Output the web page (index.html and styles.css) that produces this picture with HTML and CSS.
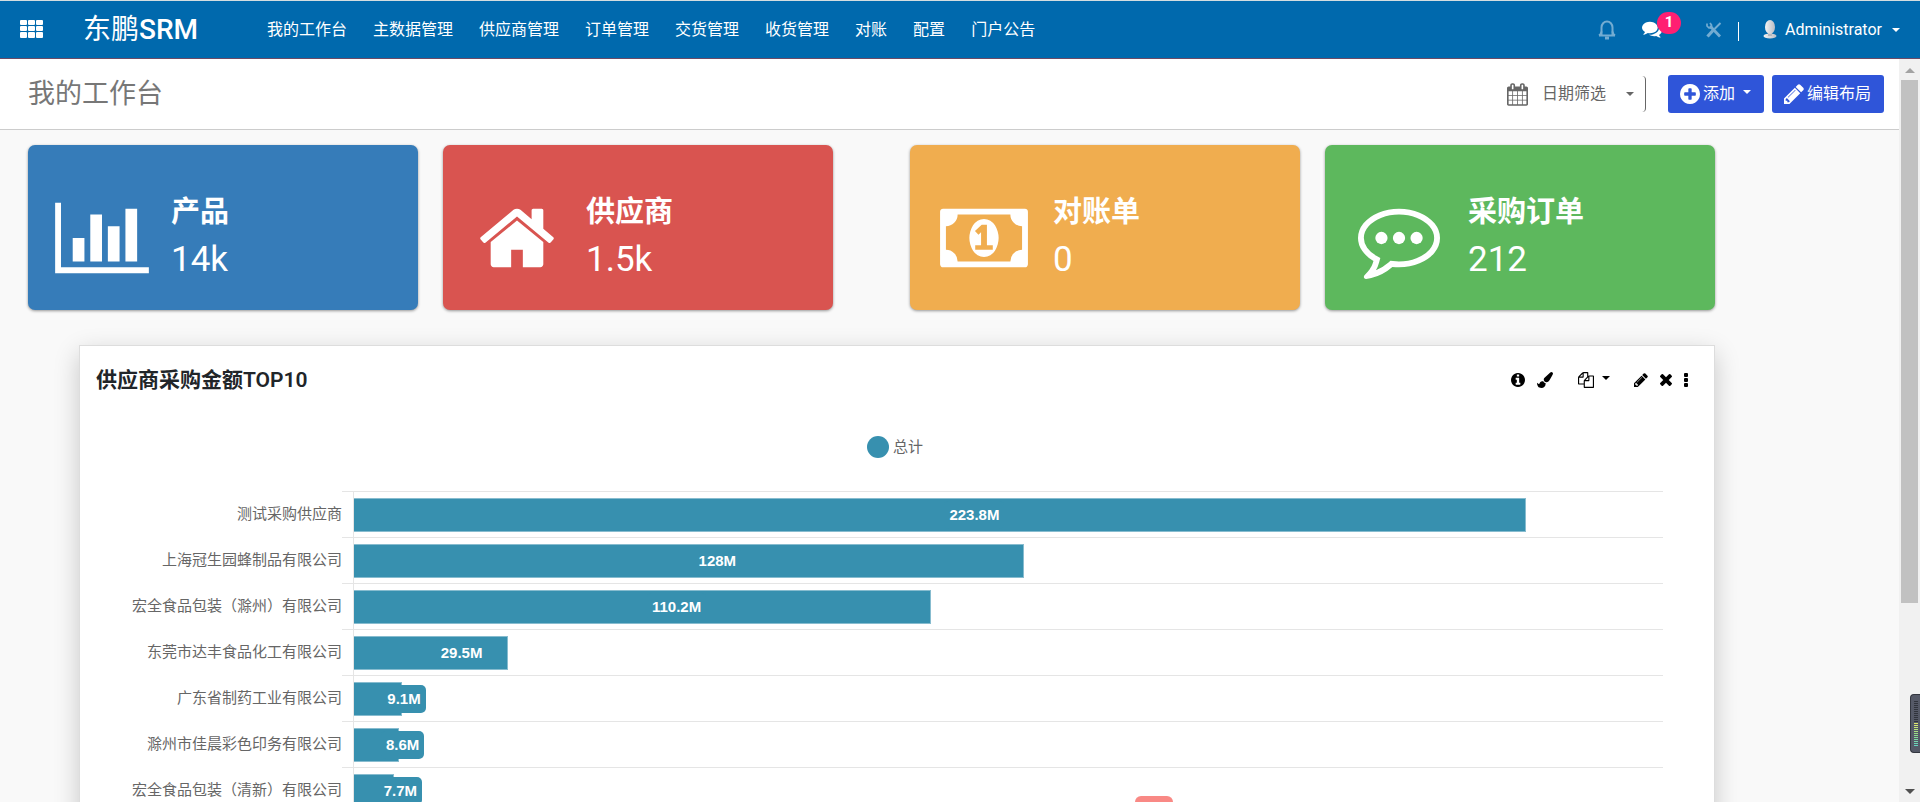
FILE: index.html
```html
<!DOCTYPE html>
<html lang="zh-CN">
<head>
<meta charset="utf-8">
<title>我的工作台 - 东鹏SRM</title>
<link rel="stylesheet" href="styles.css">
</head>
<body>
<header class="topbar">
  <button class="apps" aria-label="应用">
    <svg width="24" height="20" viewBox="0 0 24 20" fill="currentColor"><rect x="0" y="0" width="7" height="5" rx="1"/><rect x="8" y="0" width="7" height="5" rx="1"/><rect x="16" y="0" width="7" height="5" rx="1"/><rect x="0" y="6" width="7" height="5" rx="1"/><rect x="8" y="6" width="7" height="5" rx="1"/><rect x="16" y="6" width="7" height="5" rx="1"/><rect x="0" y="12" width="7" height="6" rx="1"/><rect x="8" y="12" width="7" height="6" rx="1"/><rect x="16" y="12" width="7" height="6" rx="1"/></svg>
  </button>
  <a class="brand" href="#">东鹏<b>SRM</b></a>
  <nav class="menu">
    <a href="#">我的工作台</a><a href="#">主数据管理</a><a href="#">供应商管理</a><a href="#">订单管理</a><a href="#">交货管理</a><a href="#">收货管理</a><a href="#">对账</a><a href="#">配置</a><a href="#">门户公告</a>
  </nav>
  <div class="systray">
    <button class="dim" aria-label="通知">
      <svg width="18" height="20" viewBox="0 0 18 20" fill="none" stroke="currentColor" stroke-width="2"><path d="M1 15.500h16M3.500 15V7.500a5.500 6 0 0 1 11 0V15"/><path d="M7 18h4" stroke-width="3"/><path d="M1 15.500c1.500-1 2.500-2 2.500-4M17 15.500c-1.500-1-2.500-2-2.500-4"/></svg>
    </button>
    <button class="chat" aria-label="消息">
      <svg width="20" height="20" viewBox="0 0 1792 1792" fill="currentColor"><path d="M1408 768q0 139-94 257t-256.500 186.500-353.500 68.500q-86 0-176-16-124 88-278 128-36 9-86 16h-3q-11 0-20.500-8t-11.500-21q-1-3-1-6.500t.5-6.500 2-6l2.500-5 3.500-5.500 4-5 4.500-5 4-4.500q5-6 23-25t26-29.500 22.500-29 25-38.500 20.500-44q-124-72-195-177t-71-224q0-139 94-257t256.500-186.500 353.500-68.500 353.500 68.500 256.500 186.500 94 257zm384 256q0 120-71 224.500t-195 176.500q10 24 20.500 44t25 38.500 22.500 29 26 29.500 23 25q1 1 4 4.500t4.500 5 4 5 3.500 5.500l2.500 5 2 6 .5 6.500-1 6.500q-3 14-13 22t-22 7q-50-7-86-16-154-40-278-128-90 16-176 16-271 0-472-132 58 4 88 4 161 0 309-45t264-129q125-92 192-212t67-254q0-77-23-152 129 71 204 178t75 230z"/></svg>
      <span class="badge">1</span>
    </button>
    <button class="dim" aria-label="工具">
      <svg width="16" height="16" viewBox="0 0 16 16" fill="none" stroke="currentColor"><path d="M4 4l10 10.500" stroke-width="2.800"/><path d="M1 1.500v2.500l2 2h2.500V3L4 1" stroke-width="1.700"/><path d="M14.500 1L8.500 7" stroke-width="2"/><path d="M7 8.500L1.500 14.500" stroke-width="3.200"/></svg>
    </button>
    <span class="divider"></span>
    <button class="user">
      <svg width="14" height="19" viewBox="0 0 14 19"><defs><linearGradient id="av" x1="0" x2="1"><stop offset="0" stop-color="#f4f4f4"/><stop offset="1" stop-color="#b9bcc4"/></linearGradient></defs><ellipse cx="7" cy="16" rx="6.500" ry="2.500" fill="url(#av)"/><path d="M5 12h4v4H5z" fill="#b5b8be"/><ellipse cx="7" cy="7" rx="5" ry="7" fill="url(#av)"/></svg>
      <span>Administrator</span><i class="caret"></i>
    </button>
  </div>
</header>

<div class="viewport">
  <main class="content">
    <div class="control">
      <h1>我的工作台</h1>
      <div class="actions">
        <button class="date">
          <svg width="21" height="23" viewBox="64 0 1664 1792" fill="currentColor"><path d="M192 1664h288v-288h-288v288zm352 0h320v-288h-320v288zm-352-352h288v-320h-288v320zm352 0h320v-320h-320v320zm-352-384h288v-288h-288v288zm736 736h320v-288h-320v288zm-384-736h320v-288h-320v288zm768 736h288v-288h-288v288zm-384-352h320v-320h-320v320zm-352-864v-288q0-13-9.500-22.500t-22.500-9.500h-64q-13 0-22.500 9.500t-9.500 22.500v288q0 13 9.500 22.500t22.500 9.500h64q13 0 22.500-9.500t9.500-22.500zm736 864h288v-320h-288v320zm-384-384h320v-288h-320v288zm384 0h288v-288h-288v288zm32-480v-288q0-13-9.500-22.500t-22.500-9.500h-64q-13 0-22.500 9.500t-9.500 22.500v288q0 13 9.500 22.500t22.500 9.500h64q13 0 22.500-9.500t9.500-22.500zm384-64v1280q0 52-38 90t-90 38h-1408q-52 0-90-38t-38-90v-1280q0-52 38-90t90-38h128v-96q0-66 47-113t113-47h64q66 0 113 47t47 113v96h384v-96q0-66 47-113t113-47h64q66 0 113 47t47 113v96h128q52 0 90 38t38 90z"/></svg>
          <span>日期筛选</span><i class="caret"></i>
        </button>
        <button class="primary add">
          <svg width="20" height="20" viewBox="128 128 1536 1536" fill="currentColor"><path d="M1344 960v-128q0-26-19-45t-45-19h-256v-256q0-26-19-45t-45-19h-128q-26 0-45 19t-19 45v256h-256q-26 0-45 19t-19 45v128q0 26 19 45t45 19h256v256q0 26 19 45t45 19h128q26 0 45-19t19-45v-256h256q26 0 45-19t19-45zm320-64q0 209-103 385.500t-279.500 279.500-385.500 103-385.500-103-279.500-279.500-103-385.500 103-385.500 279.500-279.500 385.500-103 385.500 103 279.500 279.500 103 385.500z"/></svg>
          <span>添加</span><i class="caret"></i>
        </button>
        <button class="primary">
          <svg width="20" height="20" viewBox="128 128 1536 1536" fill="currentColor"><path d="M491 1536l91-91-235-235-91 91v107h128v128h107zm523-928q0-22-22-22-10 0-17 7l-542 542q-7 7-7 17 0 22 22 22 10 0 17-7l542-542q7-7 7-17zm-54-192l416 416-832 832h-416v-416zm683 96q0 53-37 90l-166 166-416-416 166-165q36-38 90-38 53 0 91 38l235 234q37 39 37 91z"/></svg>
          <span>编辑布局</span>
        </button>
      </div>
    </div>

    <div class="board">
      <section class="tiles">
        <div class="pair">
          <article class="tile blue">
            <svg width="94" height="82" viewBox="0 0 2048 1792" fill="currentColor"><path d="M640 896v512h-256v-512h256zM1024 384v1024h-256v-1024h256zM2048 1536v128h-2048v-1536h128v1408h1920zM1408 640v768h-256v-768h256zM1792 256v1152h-256v-1152h256z"/></svg>
            <div><h2>产品</h2><p>14k</p></div>
          </article>
          <article class="tile red">
            <svg width="76" height="82" viewBox="0 0 1664 1792" fill="currentColor"><path d="M1408 992v480q0 26-19 45t-45 19h-384v-384h-256v384h-384q-26 0-45-19t-19-45v-480q0-1 .5-3t.5-3l575-474 575 474q1 2 1 6zm223-69l-62 74q-8 9-21 11h-3q-13 0-21-7l-692-577-692 577q-12 8-24 7-13-2-21-11l-62-74q-8-10-7-23.500t11-21.500l719-599q32-26 76-26t76 26l244 204v-195q0-14 9-23t23-9h192q14 0 23 9t9 23v408l219 182q10 8 11 21.500t-7 23.500z"/></svg>
            <div><h2>供应商</h2><p>1.5k</p></div>
          </article>
        </div>
        <div class="pair">
          <article class="tile orange">
            <svg width="88" height="82" viewBox="0 0 1920 1792" fill="currentColor"><path d="M768 1152h384v-96h-128v-448h-114l-148 137 77 80q42-37 55-57h2v288h-128v96zm512-256q0 70-21 142t-59.500 134-101.500 101-138 39-138-39-101.500-101-59.500-134-21-142 21-142 59.500-134 101.500-101 138-39 138 39 101.500 101 59.500 134 21 142zm512 256v-512q-106 0-181-75t-75-181h-1152q0 106-75 181t-181 75v512q106 0 181 75t75 181h1152q0-106 75-181t181-75zm128-832v1152q0 26-19 45t-45 19h-1792q-26 0-45-19t-19-45v-1152q0-26 19-45t45-19h1792q26 0 45 19t19 45z"/></svg>
            <div><h2>对账单</h2><p>0</p></div>
          </article>
          <article class="tile green">
            <svg width="82" height="82" viewBox="0 0 1792 1792" fill="currentColor"><circle cx="512" cy="896" r="134"/><circle cx="896" cy="896" r="134"/><circle cx="1280" cy="896" r="134"/><path d="M896 384q-204 0-381.500 69.500t-282 187.500-104.500 255q0 112 71.500 213.500t201.500 175.500l87 50-27 96q-24 91-70 172 152-63 275-171l43-38 57 6q69 8 130 8 204 0 381.500-69.500t282-187.500 104.500-255-104.500-255-282-187.500-381.500-69.500zm896 512q0 174-120 321.500t-326 233-450 85.500q-70 0-145-8-198 175-460 242-49 14-114 22h-5q-15 0-27-10.500t-16-27.500v-1q-3-4-.5-12t2-10 4.500-9.500l6-9 7-8.500 8-9q7-8 31-34.500t34.500-38 31-39.500 32.500-51 27-59 26-76q-157-89-247.500-220t-90.500-281q0-174 120-321.500t326-233 450-85.500 450 85.500 326 233 120 321.500z"/></svg>
            <div><h2>采购订单</h2><p>212</p></div>
          </article>
        </div>
      </section>

      <section class="panel">
        <div class="panel-head">
          <h3>供应商采购金额TOP10</h3>
          <div class="tools">
            <button aria-label="信息"><svg width="14" height="14" viewBox="128 128 1536 1536" fill="currentColor"><path d="M1152 1376v-160q0-14-9-23t-23-9h-96v-512q0-14-9-23t-23-9h-320q-14 0-23 9t-9 23v160q0 14 9 23t23 9h96v320h-96q-14 0-23 9t-9 23v160q0 14 9 23t23 9h448q14 0 23-9t9-23zm-128-896v-160q0-14-9-23t-23-9h-192q-14 0-23 9t-9 23v160q0 14 9 23t23 9h192q14 0 23-9t9-23zm640 416q0 209-103 385.500t-279.500 279.500-385.500 103-385.500-103-279.500-279.500-103-385.500 103-385.500 279.500-279.500 385.500-103 385.500 103 279.500 279.500 103 385.500z"/></svg></button>
            <button class="brush" aria-label="样式"><svg width="16" height="16" viewBox="0 0 1792 1792" fill="currentColor"><path d="M1615 0q70 0 122.500 46.500t52.500 116.500q0 63-45 151-332 629-465 752-97 91-218 91-126 0-216.500-92.500t-90.500-219.500q0-128 92-212l638-579q59-54 130-54zm-909 1034q39 76 106.500 130t150.500 76l1 71q4 213-129.500 347t-348.500 134q-123 0-218-46.500t-152.500-127.500-86.500-183-29-220q7 5 41 30t62 44.500 59 36.500 46 17q41 0 55-37 25-66 57.500-112.500t69.500-76 88-47.500 103-25.500 125-10.500z"/></svg></button>
            <button class="copy" aria-label="复制"><svg width="16" height="16" viewBox="0 0 1792 1792" fill="currentColor"><path d="M1696 384q40 0 68 28t28 68v1216q0 40-28 68t-68 28h-960q-40 0-68-28t-28-68v-288h-544q-40 0-68-28t-28-68v-672q0-40 20-88t48-76l408-408q28-28 76-48t88-20h416q40 0 68 28t28 68v328q68-40 128-40h416zm-544 213l-299 299h299v-299zm-640-384l-299 299h299v-299zm196 647l316-316v-416h-384v416q0 40-28 68t-68 28h-416v640h512v-256q0-40 20-88t48-76zm956 804v-1152h-384v416q0 40-28 68t-68 28h-416v640h896z"/></svg><i class="caret"></i></button>
            <button class="edit" aria-label="编辑"><svg width="14" height="14" viewBox="128 128 1536 1536" fill="currentColor"><path d="M491 1536l91-91-235-235-91 91v107h128v128h107zm523-928q0-22-22-22-10 0-17 7l-542 542q-7 7-7 17 0 22 22 22 10 0 17-7l542-542q7-7 7-17zm-54-192l416 416-832 832h-416v-416zm683 96q0 53-37 90l-166 166-416-416 166-165q36-38 90-38 53 0 91 38l235 234q37 39 37 91z"/></svg></button>
            <button aria-label="移除"><svg width="12" height="12" viewBox="302 366 1188 1188" fill="currentColor"><path d="M1490 1322q0 40-28 68l-136 136q-28 28-68 28t-68-28l-294-294-294 294q-28 28-68 28t-68-28l-136-136q-28-28-28-68t28-68l294-294-294-294q-28-28-28-68t28-68l136-136q28-28 68-28t68 28l294 294 294-294q28-28 68-28t68 28l136 136q28 28 28 68t-28 68l-294 294 294 294q28 28 28 68z"/></svg></button>
            <button aria-label="更多"><svg width="4" height="14" viewBox="0 0 4 14" fill="currentColor"><rect width="4" height="4" rx="1"/><rect y="5" width="4" height="4" rx="1"/><rect y="10" width="4" height="4" rx="1"/></svg></button>
          </div>
        </div>
        <div class="legend"><i class="dot"></i><span>总计</span></div>
        <div class="chart">
          <div class="row"><span class="name">测试采购供应商</span><div class="track"><div class="bar" style="width:89.52%"><b>223.8M</b></div></div></div>
          <div class="row"><span class="name">上海冠生园蜂制品有限公司</span><div class="track"><div class="bar" style="width:51.2%"><b>128M</b></div></div></div>
          <div class="row"><span class="name">宏全食品包装（滁州）有限公司</span><div class="track"><div class="bar" style="width:44.08%"><b>110.2M</b></div></div></div>
          <div class="row"><span class="name">东莞市达丰食品化工有限公司</span><div class="track"><div class="bar" style="width:11.8%"><b>29.5M</b></div></div></div>
          <div class="row"><span class="name">广东省制药工业有限公司</span><div class="track"><div class="bar" style="width:3.64%"><b>9.1M</b></div></div></div>
          <div class="row"><span class="name">滁州市佳晨彩色印务有限公司</span><div class="track"><div class="bar" style="width:3.44%"><b>8.6M</b></div></div></div>
          <div class="row"><span class="name">宏全食品包装（清新）有限公司</span><div class="track"><div class="bar" style="width:3.08%"><b>7.7M</b></div></div></div>
        </div>
      </section>
    </div>
  </main>
  <div class="scrollbar"><i class="arrow up"></i><div class="thumb"></div><i class="arrow down"></i></div>
</div>
<div class="toast"></div>
<div class="meter"><i class="off"></i><i class="on"></i></div>
</body>
</html>
```
FILE: styles.css
```css
* { box-sizing: border-box; }
body {
  margin: 0;
  height: 100vh;
  display: flex;
  flex-direction: column;
  overflow: hidden;
  position: relative;
  background: #f9f9f9;
  font-family: Roboto, "Noto Sans CJK SC", sans-serif;
  font-size: 16px;
  line-height: 24px;
  color: #212529;
}
h1, h2, h3, p { margin: 0; }
a { color: inherit; text-decoration: none; }
svg { display: block; flex: none; }
button {
  display: flex;
  align-items: center;
  padding: 0;
  border: 0;
  background: none;
  color: inherit;
  font: inherit;
  white-space: nowrap;
}
.caret {
  border: 4px solid transparent;
  border-top-color: currentColor;
  border-bottom: 0;
}

/* top bar */
.topbar {
  flex: none;
  display: flex;
  align-items: center;
  height: 59px;
  padding: 0 20px;
  border-top: 1px solid #d3dde0;
  border-bottom: 1px solid #6b4a66;
  background: #0069ad;
  color: #fff;
  white-space: nowrap;
}
.apps { margin-right: 39px; }
.brand { min-width: 184px; font-size: 28px; line-height: 40px; }
.brand b { font-weight: 500; }
.menu { display: flex; gap: 26px; }
.systray { display: flex; align-items: center; margin-left: auto; }
.dim { opacity: .45; }
.chat { position: relative; margin: 0 44px 0 26px; }
.chat svg { margin-bottom: 2px; }
.badge {
  position: absolute;
  left: 15px;
  top: -7px;
  width: 24px;
  height: 22px;
  border-radius: 11px;
  background: #ff1f72;
  font-size: 15px;
  font-weight: 700;
  line-height: 21px;
  text-align: center;
}
.divider { width: 1px; height: 19px; margin: 3px 24px 0 16px; background: #fff; }
.user svg { margin-right: 8px; }
.user .caret { margin-left: 10px; }

/* page area */
.viewport { flex: 1; display: flex; min-height: 0; }
.content { flex: 1; min-width: 0; overflow: hidden; }
.control {
  display: flex;
  align-items: center;
  justify-content: space-between;
  height: 71px;
  padding: 0 15px 0 28px;
  border-bottom: 1px solid #ccc;
  background: #fff;
}
h1 { font-size: 27px; line-height: 36px; font-weight: 400; color: #777; }
.actions { display: flex; align-items: center; }
.date {
  height: 36px;
  margin-right: 22px;
  padding-right: 11px;
  border-right: 1px solid #666;
  border-radius: 4px;
  color: #666;
}
.date span { margin: 0 20px 0 14px; }
.primary {
  height: 38px;
  padding: 0 13px 0 12px;
  border-radius: 3px;
  background: #2f55d9;
  color: #fff;
}
.primary span { margin-left: 3px; }
.primary .caret { margin: 0 0 4px 8px; }
.add { margin-right: 8px; }

.board { padding: 15px 184px 0 28px; }
.tiles { display: flex; gap: 77px; }
.pair { flex: 1; display: flex; gap: 25px; }
.tile {
  flex: 1;
  display: grid;
  grid-template-columns: 116px 1fr;
  gap: 11px;
  align-items: center;
  height: 165px;
  padding: 20px 14px 0 16px;
  border-radius: 7px;
  box-shadow: 0 1px 3px rgba(0, 0, 0, .4);
  color: #fff;
}
.tile svg { justify-self: center; }
.tile h2 { font-size: 29px; line-height: 44px; font-weight: 700; }
.tile p { font-size: 35px; line-height: 52px; }
.blue { background: #367cb9; }
.red { background: #d95450; }
.orange { background: #f0ad4f; }
.green { background: #5db85d; }

/* chart panel */
.panel {
  height: 620px;
  margin: 35px 0 0 51px;
  border: 1px solid #ddd;
  background: #fff;
  box-shadow: 0 8px 24px rgba(0, 0, 0, .2);
}
.panel-head {
  display: flex;
  align-items: center;
  justify-content: space-between;
  height: 68px;
  padding: 0 26px 0 16px;
}
h3 { font-size: 21px; line-height: 32px; font-weight: 600; }
.tools { display: flex; align-items: center; gap: 12px; color: #000; }
.copy { margin-left: 13px; gap: 8px; }
.copy .caret { margin-bottom: 4px; }
.edit { margin-left: 12px; }
.legend {
  display: flex;
  align-items: center;
  justify-content: center;
  gap: 4px;
  height: 66px;
  padding-right: 4px;
  font-size: 15px;
  color: #666;
}
.dot { width: 22px; height: 22px; border-radius: 50%; background: #3790af; }
.chart { padding: 11px 51px 0 16px; }
.row { display: grid; grid-template-columns: 246px 1fr; height: 46px; }
.name {
  font-size: 15px;
  line-height: 46px;
  text-align: right;
  color: #666;
  white-space: nowrap;
}
.track {
  height: 46px;
  padding: 6px 0 0 12px;
  border-top: 1px solid #e5e5e5;
  background: linear-gradient(#e5e5e5, #e5e5e5) 11px 0 / 1px 100% no-repeat;
}
.bar {
  display: flex;
  align-items: center;
  height: 34px;
  border: 1px solid #87bccf;
  border-left: 0;
  background: #3790af;
}
.bar b {
  margin-left: calc(50% + 5px);
  padding: 0 5px;
  border-radius: 5px;
  background: #3790af;
  font: 700 15px/28px "Liberation Sans", Arial, sans-serif;
  color: #fff;
}

/* scrollbar */
.scrollbar {
  flex: none;
  display: flex;
  flex-direction: column;
  align-items: center;
  width: 21px;
  padding: 9px 0 8px;
  background: #f1f1f1;
}
.arrow { border: 5px solid transparent; }
.up { border-top: 0; border-bottom-color: #a3a3a3; }
.down { margin-top: auto; border-bottom: 0; border-top-color: #505050; }
.thumb { width: 17px; height: 72%; margin-top: 7px; background: #c1c1c1; }

.toast {
  position: absolute;
  left: 1135px;
  bottom: 0;
  width: 38px;
  height: 6px;
  border-radius: 6px 6px 0 0;
  background: #f98985;
}
.meter {
  position: absolute;
  right: 0;
  top: 694px;
  width: 10px;
  height: 59px;
  padding: 6px 2px 0 3px;
  border: 1px solid #33363f;
  border-right: 0;
  border-radius: 4px 0 0 4px;
  background: #555967;
}
.meter i { display: block; width: 4px; }
.off { height: 22px; background: repeating-linear-gradient(#30333c 0 1px, transparent 1px 2px); }
.on { height: 24px; background: repeating-linear-gradient(transparent 0 1px, #555967 1px 2px), linear-gradient(#e6ea6c, #8fdd8a 50%, #5fd3c8); }
```
